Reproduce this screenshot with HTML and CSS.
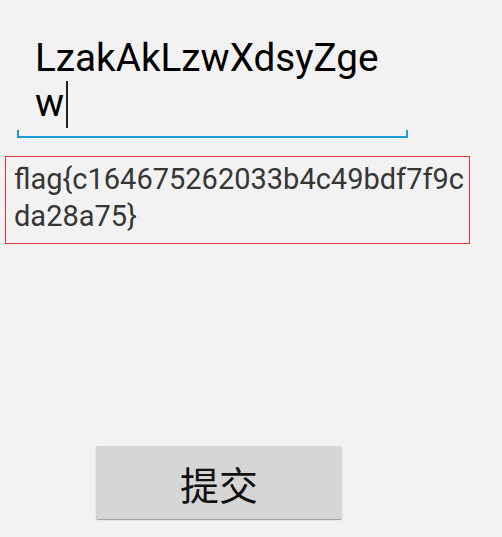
FILE: index.html
```html
<!DOCTYPE html>
<html>
<head>
<meta charset="utf-8">
<link rel="stylesheet" href="styles.css">
</head>
<body>
<div class="screen">
  <div class="field">
    <div class="field-text">LzakAkLzwXdsyZgew<span class="cursor"></span></div>
    <div class="field-line"></div>
  </div>
  <div class="flag-box">flag{c164675262033b4c49bdf7f9cda28a75}</div>
  <button class="submit">提交</button>
</div>
</body>
</html>
```
FILE: styles.css
```css
html, body {
  margin: 0;
  padding: 0;
  background: #f2f2f2;
}
.screen {
  width: 502px;
  height: 537px;
  padding-top: 35px;
  box-sizing: border-box;
  font-family: Roboto, "Noto Sans CJK SC", sans-serif;
}
.field {
  margin-left: 17px;
  width: 391px;
}
.field-text {
  padding-left: 18px;
  width: 356px;
  font-size: 38.7px;
  line-height: 45px;
  color: #000;
  word-break: break-all;
}
.cursor {
  display: inline-block;
  width: 2px;
  height: 47px;
  background: #222;
  margin-left: 2px;
  vertical-align: -12px;
}
.field-line {
  margin-top: 2px;
  height: 6px;
  border: 2px solid #1a9dd8;
  border-top: none;
}
.flag-box {
  margin-top: 18px;
  margin-left: 5px;
  width: 465px;
  height: 88px;
  box-sizing: border-box;
  border: 1px solid #e53935;
  padding: 4px 0 0 8px;
  font-size: 29px;
  line-height: 37px;
  color: #363636;
  word-break: break-all;
}
.submit {
  display: block;
  margin: 202px 0 0 96px;
  width: 246px;
  height: 73px;
  padding: 0;
  border: none;
  border-radius: 2px;
  background: #d6d6d6;
  box-shadow: 0 1px 1px rgba(0, 0, 0, 0.35);
  font-family: "Noto Sans CJK SC", sans-serif;
  font-size: 39px;
  color: #111;
}
```
